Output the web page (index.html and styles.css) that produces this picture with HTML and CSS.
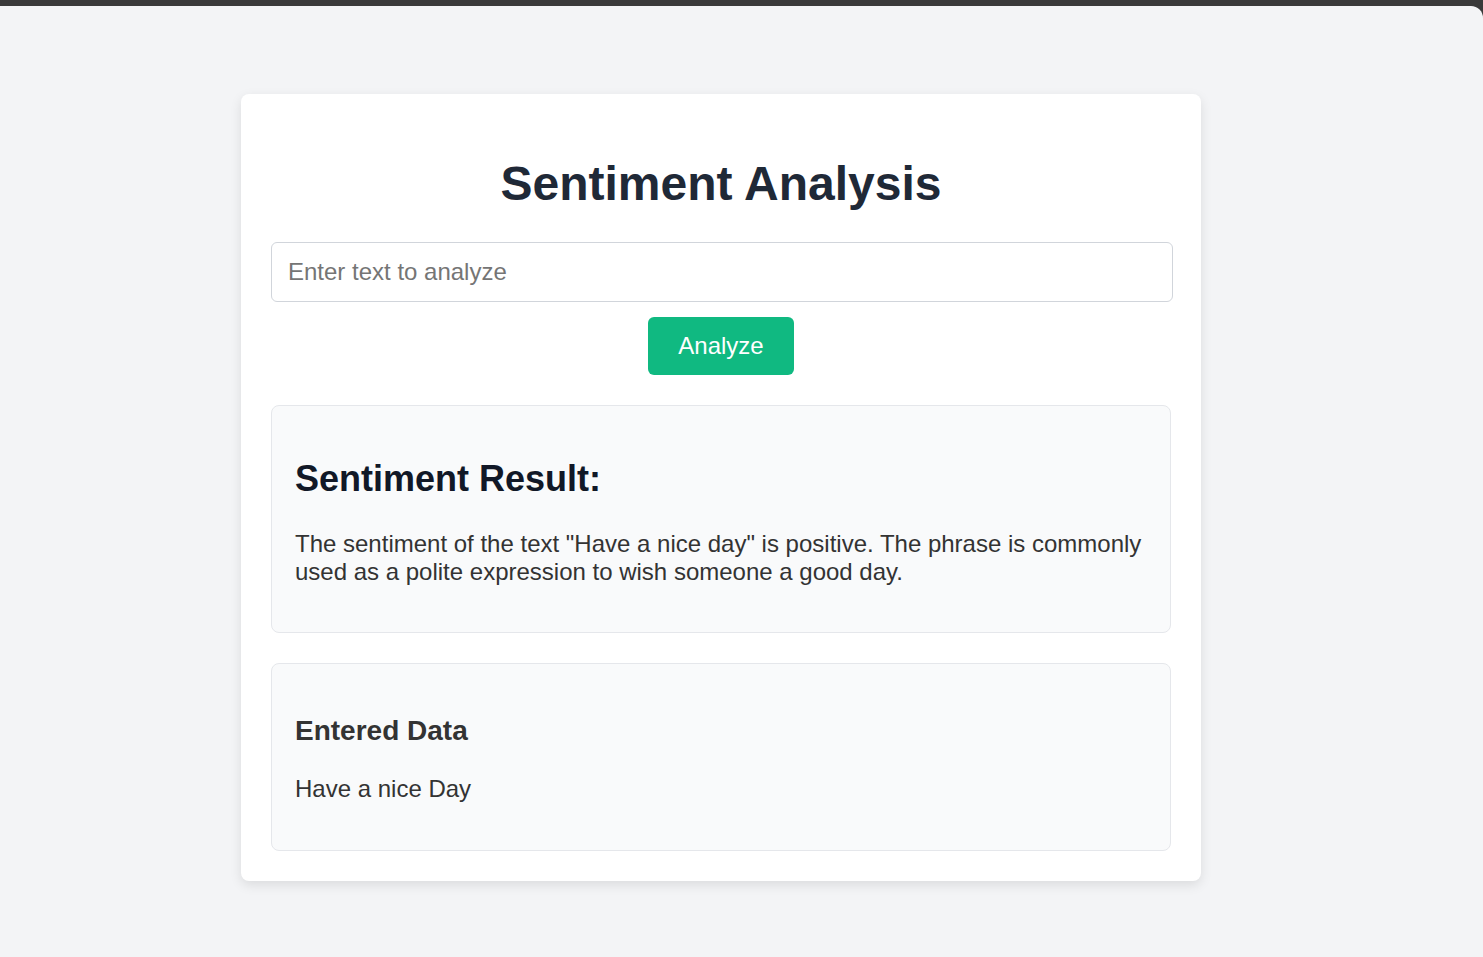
FILE: index.html
```html
<!DOCTYPE html>
<html lang="en">
<head>
<meta charset="utf-8">
<title>Sentiment Analysis</title>
<link rel="stylesheet" href="styles.css">
</head>
<body>
<div class="window">
  <main class="card">
    <h1 class="title">Sentiment Analysis</h1>
    <input class="text-input" type="text" placeholder="Enter text to analyze">
    <div class="actions">
      <button class="btn" type="button">Analyze</button>
    </div>
    <section class="panel">
      <h2 class="result-heading">Sentiment Result:</h2>
      <p class="panel-text result-text">The sentiment of the text "Have a nice day" is positive. The phrase is commonly used as a polite expression to wish someone a good day.</p>
    </section>
    <section class="panel panel-data">
      <h3 class="data-heading">Entered Data</h3>
      <p class="panel-text">Have a nice Day</p>
    </section>
  </main>
</div>
</body>
</html>
```
FILE: styles.css
```css
html, body {
  margin: 0;
  padding: 0;
}
body {
  background: #3a3a3a;
  font-family: "Liberation Sans", Arial, sans-serif;
  height: 957px;
  overflow: hidden;
}
.window {
  margin-top: 6px;
  height: 951px;
  background: #f3f4f6;
  border-top-right-radius: 12px;
  padding-top: 88px;
  box-sizing: border-box;
}
.card {
  width: 960px;
  box-sizing: border-box;
  margin-left: 241px;
  background: #ffffff;
  border-radius: 8px;
  padding: 30px;
  box-shadow: 0 4px 12px rgba(0, 0, 0, 0.1);
}
.title {
  margin: 32px 0 31px;
  text-align: center;
  font-size: 48px;
  font-weight: 700;
  color: #1f2937;
  line-height: 55px;
}
.text-input {
  display: block;
  width: 902px;
  height: 60px;
  box-sizing: border-box;
  padding: 0 16px;
  border: 1px solid #d1d5db;
  border-radius: 6px;
  font-family: "Liberation Sans", Arial, sans-serif;
  font-size: 24px;
  color: #333;
  background: #fff;
  outline: none;
}
.text-input::placeholder {
  color: #757575;
}
.actions {
  display: flex;
  justify-content: center;
  margin-top: 15px;
}
.btn {
  background: #10b981;
  color: #ffffff;
  border: none;
  border-radius: 6px;
  font-family: "Liberation Sans", Arial, sans-serif;
  font-size: 24px;
  padding: 0 30px;
  height: 58px;
  cursor: pointer;
}
.panel {
  margin-top: 30px;
  background: #f9fafb;
  border: 1px solid #e5e7eb;
  border-radius: 8px;
  padding: 23px;
}
.result-heading {
  margin: 29px 0 31px;
  font-size: 36px;
  font-weight: 700;
  color: #111827;
  line-height: 41px;
}
.data-heading {
  margin: 28px 0 28px;
  font-size: 28px;
  font-weight: 700;
  color: #333333;
  line-height: 32px;
}
.panel-text {
  margin: 24px 0;
  font-size: 24px;
  line-height: 28px;
  color: #333333;
}
.result-text {
  margin-bottom: 23px;
}
```
